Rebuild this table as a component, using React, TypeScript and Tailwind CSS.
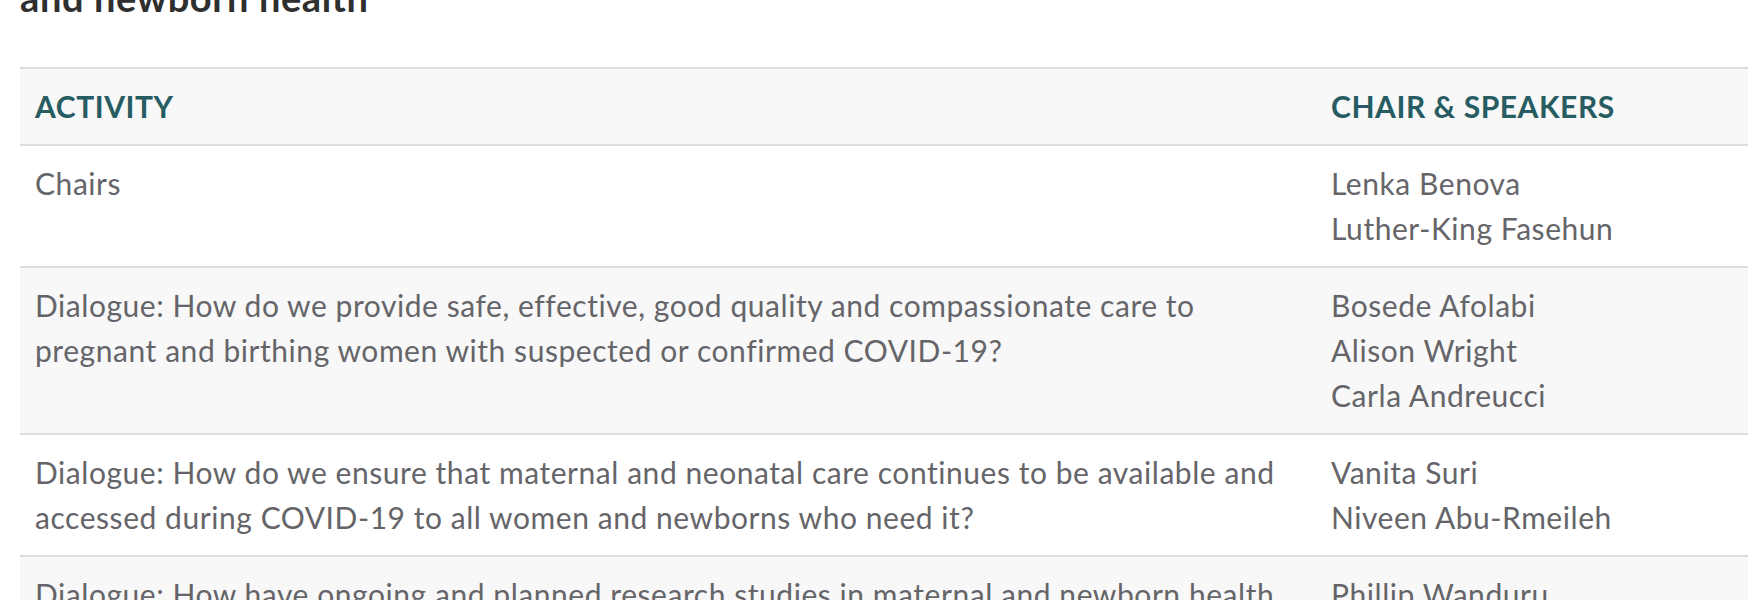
import React from "react";

const rows: { activity: React.ReactNode; people: string[]; shaded: boolean }[] = [
  { activity: "Chairs", people: ["Lenka Benova", "Luther-King Fasehun"], shaded: false },
  {
    activity: (
      <>
        Dialogue: How do we provide safe, effective, good quality and compassionate care to
        <br />
        pregnant and birthing women with suspected or confirmed COVID-19?
      </>
    ),
    people: ["Bosede Afolabi", "Alison Wright", "Carla Andreucci"],
    shaded: true,
  },
  {
    activity: (
      <>
        Dialogue: How do we ensure that maternal and neonatal care continues to be available and
        <br />
        accessed during COVID-19 to all women and newborns who need it?
      </>
    ),
    people: ["Vanita Suri", "Niveen Abu-Rmeileh"],
    shaded: false,
  },
  {
    activity: (
      <>
        Dialogue: How have ongoing and planned research studies in maternal and newborn health
        <br />
        been affected by COVID-19?
      </>
    ),
    people: ["Phillip Wanduru", "Ana Pilar Betrán"],
    shaded: true,
  },
];

export default function App() {
  return (
    <div
      className="w-[1748px] h-[600px] overflow-hidden bg-white"
      style={{ fontFamily: "Lato, 'Open Sans', sans-serif" }}
    >
      <div className="pl-[20px]">
        <h2 className="mt-[-25px] text-[38px] leading-[44px] font-bold text-[#2f2f2f] tracking-[0.6px]">
          and newborn health
        </h2>
        <div className="mt-[48px] w-[1740px] border-t-2 border-[#dddddd] tracking-[0.55px]">
          <div className="grid grid-cols-[1296px_1fr] bg-[#f8f8f8] border-b-2 border-[#dddddd]">
            <div className="pl-[15px] py-[15px] text-[30px] leading-[45px] font-bold text-[#275c62]">
              ACTIVITY
            </div>
            <div className="pl-[15px] py-[15px] text-[30px] leading-[45px] font-bold text-[#275c62]">
              CHAIR &amp; SPEAKERS
            </div>
          </div>
          {rows.map((r, i) => (
            <div
              key={i}
              className={`grid grid-cols-[1296px_1fr] border-b-2 border-[#dddddd] ${
                r.shaded ? "bg-[#f8f8f8]" : "bg-white"
              }`}
            >
              <div className="pl-[15px] pr-[20px] py-[15px] text-[30px] leading-[45px] text-[#656569]">
                {r.activity}
              </div>
              <div className="pl-[15px] py-[15px] text-[30px] leading-[45px] text-[#656569]">
                {r.people.map((p) => (
                  <div key={p}>{p}</div>
                ))}
              </div>
            </div>
          ))}
        </div>
      </div>
    </div>
  );
}
